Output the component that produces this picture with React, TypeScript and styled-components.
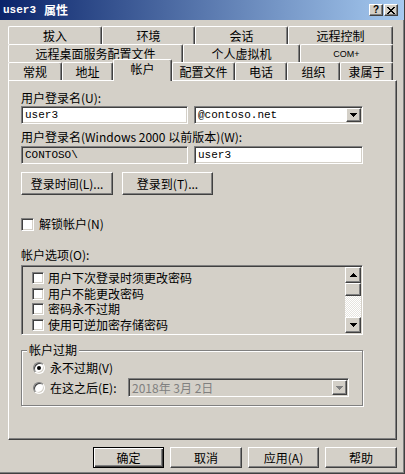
import React from "react";
import styled, { createGlobalStyle, css } from "styled-components";

const FACE = "#d4d0c8";
const SHADOW = "#808080";
const DARK = "#404040";

const GlobalStyle = createGlobalStyle`
  html, body { margin: 0; padding: 0; background: ${FACE}; }
  body {
    font-family: "Noto Sans CJK SC", "Liberation Sans", sans-serif;
    font-size: 12px;
    line-height: 14px;
    color: #000;
  }
  *, *::before, *::after { box-sizing: border-box; }
`;

const raised = css`
  border-style: solid;
  border-width: 1px;
  border-color: #fff ${DARK} ${DARK} #fff;
  box-shadow: inset -1px -1px 0 ${SHADOW};
`;

const sunken = css`
  border-style: solid;
  border-width: 1px;
  border-color: ${SHADOW} #fff #fff ${SHADOW};
  box-shadow: inset 1px 1px 0 ${DARK}, inset -1px -1px 0 ${FACE};
`;

type TabDef = { label: string; w: number; active?: boolean; small?: boolean };

const tabRows: TabDef[][] = [
  [
    { label: "拔入", w: 94 },
    { label: "环境", w: 93 },
    { label: "会话", w: 93 },
    { label: "远程控制", w: 105 },
  ],
  [
    { label: "远程桌面服务配置文件", w: 175 },
    { label: "个人虚拟机", w: 117 },
    { label: "COM+", w: 93, small: true },
  ],
  [
    { label: "常规", w: 54 },
    { label: "地址", w: 51 },
    { label: "帐户", w: 59, active: true },
    { label: "配置文件", w: 63 },
    { label: "电话", w: 52 },
    { label: "组织", w: 53 },
    { label: "隶属于", w: 53 },
  ],
];

const accountOptions = [
  "用户下次登录时须更改密码",
  "用户不能更改密码",
  "密码永不过期",
  "使用可逆加密存储密码",
];

function Arrow({ up, color = "#000" }: { up?: boolean; color?: string }) {
  const d = up
    ? "M3 0h1v1H3z M2 1h3v1H2z M1 2h5v1H1z M0 3h7v1H0z"
    : "M0 0h7v1H0z M1 1h5v1H1z M2 2h3v1H2z M3 3h1v1H3z";
  return (
    <svg width="7" height="4" viewBox="0 0 7 4" shapeRendering="crispEdges">
      <path d={d} fill={color} />
    </svg>
  );
}

function CloseGlyph() {
  return (
    <svg width="8" height="7" viewBox="0 0 8 7" shapeRendering="crispEdges">
      <path
        d="M0 0h2v1H0z M6 0h2v1H6z M1 1h2v1H1z M5 1h2v1H5z M2 2h4v1H2z M3 3h2v1H3z M2 4h4v1H2z M1 5h2v1H1z M5 5h2v1H5z M0 6h2v1H0z M6 6h2v1H6z"
        fill="#000"
      />
    </svg>
  );
}

export default function App(): React.ReactElement {
  return (
    <>
      <GlobalStyle />
      <Window>
        <TitleBar>
          <Title>
            <TitleLatin>user3</TitleLatin>
            <span>属性</span>
          </Title>
          <TitleButtons>
            <TitleButton>?</TitleButton>
            <TitleButton>
              <CloseGlyph />
            </TitleButton>
          </TitleButtons>
        </TitleBar>

        <Body>
          <TabStrip>
            {tabRows.map((row, i) => (
              <TabRow key={i}>
                {row.map((t) => (
                  <Tab key={t.label} $w={t.w} $active={t.active} $small={t.small}>
                    {t.label}
                  </Tab>
                ))}
              </TabRow>
            ))}
          </TabStrip>

          <Panel>
            <Label>用户登录名(U):</Label>
            <FieldRow $mt={1}>
              <TextBox $w={167}>user3</TextBox>
              <ComboBox $w={169}>
                <span>@contoso.net</span>
                <DropButton>
                  <Arrow />
                </DropButton>
              </ComboBox>
            </FieldRow>

            <Label $mt={6}>用户登录名(Windows 2000 以前版本)(W):</Label>
            <FieldRow $mt={2}>
              <TextBox $w={167} $disabled>
                CONTOSO\
              </TextBox>
              <TextBox $w={169}>user3</TextBox>
            </FieldRow>

            <ButtonRow>
              <PushButton $w={92}>登录时间(L)...</PushButton>
              <PushButton $w={91}>登录到(T)...</PushButton>
            </ButtonRow>

            <CheckRow>
              <CheckBox $size={13} />
              <span>解锁帐户(N)</span>
            </CheckRow>

            <Label $mt={17}>帐户选项(O):</Label>
            <ListBox>
              <ListItems>
                {accountOptions.map((o) => (
                  <ListItem key={o}>
                    <CheckBox $size={12} />
                    <span>{o}</span>
                  </ListItem>
                ))}
              </ListItems>
              <ScrollBar>
                <ScrollButton>
                  <Arrow up />
                </ScrollButton>
                <ScrollThumb />
                <ScrollTrack />
                <ScrollButton>
                  <Arrow />
                </ScrollButton>
              </ScrollBar>
            </ListBox>

            <GroupBox>
              <GroupLegend>帐户过期</GroupLegend>
              <RadioRow>
                <Radio $checked />
                <span>永不过期(V)</span>
              </RadioRow>
              <RadioRow $mt={3} $h={19}>
                <Radio />
                <span>在这之后(E):</span>
                <DateBox>
                  <span>2018年 3月 2日</span>
                  <DropButton $h={15}>
                    <Arrow color={SHADOW} />
                  </DropButton>
                </DateBox>
              </RadioRow>
            </GroupBox>
          </Panel>

          <Footer>
            <PushButton $w={71} $h={21} $default>
              确定
            </PushButton>
            <PushButton $w={72} $h={21}>
              取消
            </PushButton>
            <PushButton $w={71} $h={21}>
              应用(A)
            </PushButton>
            <PushButton $w={72} $h={21}>
              帮助
            </PushButton>
          </Footer>
        </Body>
      </Window>
    </>
  );
}

const Window = styled.div`
  width: 405px;
  height: 474px;
  background: ${FACE};
  border-right: 1px solid ${DARK};
  border-bottom: 1px solid ${DARK};
  box-shadow: inset -1px -1px 0 ${SHADOW};
  display: flex;
  flex-direction: column;
  overflow: hidden;
`;

const TitleBar = styled.div`
  flex: none;
  height: 20px;
  display: flex;
  align-items: center;
  padding: 0 6px 0 3px;
  background: linear-gradient(to right, #0a246a, #a6caf0);
`;

const Title = styled.div`
  display: flex;
  align-items: center;
  gap: 8px;
  color: #fff;
  font-weight: bold;
  font-size: 12px;
`;

const TitleLatin = styled.span`
  font-family: "Liberation Mono", monospace;
  font-size: 11px;
`;

const TitleButtons = styled.div`
  margin-left: auto;
  display: flex;
  gap: 1px;
`;

const TitleButton = styled.div`
  width: 14px;
  height: 12px;
  ${raised};
  background: ${FACE};
  display: flex;
  align-items: center;
  justify-content: center;
  font: bold 10px "Liberation Sans", sans-serif;
  line-height: 10px;
  color: #000;
`;

const Body = styled.div`
  flex: 1;
  display: flex;
  flex-direction: column;
  padding: 6px 7px 0 8px;
`;

const TabStrip = styled.div`
  display: flex;
  flex-direction: column;
`;

const TabRow = styled.div`
  display: flex;
  align-items: flex-end;
  height: 18px;
`;

const Tab = styled.div<{ $w: number; $active?: boolean; $small?: boolean }>`
  flex: none;
  position: relative;
  z-index: ${(p) => (p.$active ? 2 : 0)};
  width: ${(p) => p.$w}px;
  height: ${(p) => (p.$active ? 22 : 18)}px;
  margin-bottom: ${(p) => (p.$active ? -1 : 0)}px;
  padding-bottom: ${(p) => (p.$active ? 3 : 0)}px;
  background: ${FACE};
  border-top: 1px solid #fff;
  border-left: 1px solid #fff;
  border-right: 1px solid ${DARK};
  border-radius: 2px 2px 0 0;
  box-shadow: inset -1px 0 0 ${SHADOW};
  display: flex;
  align-items: center;
  justify-content: center;
  white-space: nowrap;
  font-size: ${(p) => (p.$small ? "9px" : "12px")};
  font-family: ${(p) =>
    p.$small ? `"Liberation Sans", sans-serif` : `"Noto Sans CJK SC", sans-serif`};
`;

const Panel = styled.div`
  flex: none;
  height: 360px;
  ${raised};
  display: flex;
  flex-direction: column;
  padding: 10px 0 0 12px;
`;

const Label = styled.div<{ $mt?: number }>`
  height: 14px;
  margin-top: ${(p) => p.$mt ?? 0}px;
  white-space: nowrap;
`;

const FieldRow = styled.div<{ $mt: number }>`
  display: flex;
  gap: 6px;
  margin-top: ${(p) => p.$mt}px;
`;

const TextBox = styled.div<{ $w: number; $disabled?: boolean }>`
  width: ${(p) => p.$w}px;
  height: 18px;
  ${sunken};
  background: ${(p) => (p.$disabled ? FACE : "#fff")};
  display: flex;
  align-items: center;
  padding: 0 3px;
  font: 11px "Liberation Mono", monospace;
`;

const ComboBox = styled(TextBox)`
  justify-content: space-between;
  padding: 0 1px 0 3px;
`;

const DropButton = styled.div<{ $h?: number }>`
  width: 15px;
  height: ${(p) => p.$h ?? 14}px;
  ${raised};
  background: ${FACE};
  display: flex;
  align-items: center;
  justify-content: center;
`;

const ButtonRow = styled.div`
  display: flex;
  gap: 9px;
  margin-top: 8px;
`;

const PushButton = styled.button<{ $w: number; $h?: number; $default?: boolean }>`
  width: ${(p) => p.$w}px;
  height: ${(p) => p.$h ?? 23}px;
  padding: 0;
  background: ${FACE};
  font: 12px "Noto Sans CJK SC", sans-serif;
  line-height: 14px;
  color: #000;
  ${(p) =>
    p.$default
      ? css`
          border: 1px solid #000;
          box-shadow: inset 1px 1px 0 #fff, inset -1px -1px 0 ${DARK},
            inset -2px -2px 0 ${SHADOW};
        `
      : raised};
`;

const CheckRow = styled.div`
  display: flex;
  align-items: center;
  gap: 5px;
  height: 14px;
  margin-top: 22px;
`;

const CheckBox = styled.span<{ $size: number }>`
  flex: none;
  width: ${(p) => p.$size}px;
  height: ${(p) => p.$size}px;
  ${sunken};
  background: #fff;
`;

const ListBox = styled.div`
  width: 342px;
  height: 70px;
  margin-top: 3px;
  ${sunken};
  padding: 1px;
  display: flex;
`;

const ListItems = styled.div`
  flex: 1;
  display: flex;
  flex-direction: column;
  padding: 3px 0 0 9px;
`;

const ListItem = styled.div`
  display: flex;
  align-items: center;
  gap: 4px;
  height: 16px;
`;

const ScrollBar = styled.div`
  width: 16px;
  display: flex;
  flex-direction: column;
`;

const ScrollButton = styled.div`
  height: 16px;
  ${raised};
  background: ${FACE};
  display: flex;
  align-items: center;
  justify-content: center;
`;

const ScrollThumb = styled.div`
  height: 13px;
  ${raised};
  background: ${FACE};
`;

const ScrollTrack = styled.div`
  flex: 1;
  background: repeating-conic-gradient(#fff 0 25%, #e6e4df 0 50%) 0 0 / 2px 2px;
`;

const GroupBox = styled.div`
  position: relative;
  width: 342px;
  height: 56px;
  margin-top: 15px;
  border: 1px solid ${SHADOW};
  box-shadow: inset 1px 1px 0 #fff, 1px 1px 0 #fff;
  display: flex;
  flex-direction: column;
  padding: 10px 13px 0 11px;
`;

const GroupLegend = styled.span`
  position: absolute;
  top: -8px;
  left: 5px;
  padding: 0 2px;
  background: ${FACE};
`;

const RadioRow = styled.div<{ $mt?: number; $h?: number }>`
  display: flex;
  align-items: center;
  gap: 5px;
  height: ${(p) => p.$h ?? 14}px;
  margin-top: ${(p) => p.$mt ?? 0}px;
`;

const Radio = styled.span<{ $checked?: boolean }>`
  flex: none;
  position: relative;
  width: 12px;
  height: 12px;
  border-radius: 50%;
  border: 1px solid;
  border-color: ${SHADOW} #fff #fff ${SHADOW};
  box-shadow: inset 1px 1px 0 ${DARK}, inset -1px -1px 0 ${FACE};
  background: #fff;

  &::after {
    content: "";
    display: ${(p) => (p.$checked ? "block" : "none")};
    position: absolute;
    left: 3px;
    top: 3px;
    width: 4px;
    height: 4px;
    border-radius: 50%;
    background: #000;
  }
`;

const DateBox = styled.div`
  margin-left: auto;
  width: 221px;
  height: 19px;
  ${sunken};
  background: ${FACE};
  display: flex;
  align-items: center;
  justify-content: space-between;
  padding: 0 1px 0 3px;
  color: ${SHADOW};
`;

const Footer = styled.div`
  display: flex;
  justify-content: flex-end;
  gap: 6px;
  margin-top: 7px;
`;
